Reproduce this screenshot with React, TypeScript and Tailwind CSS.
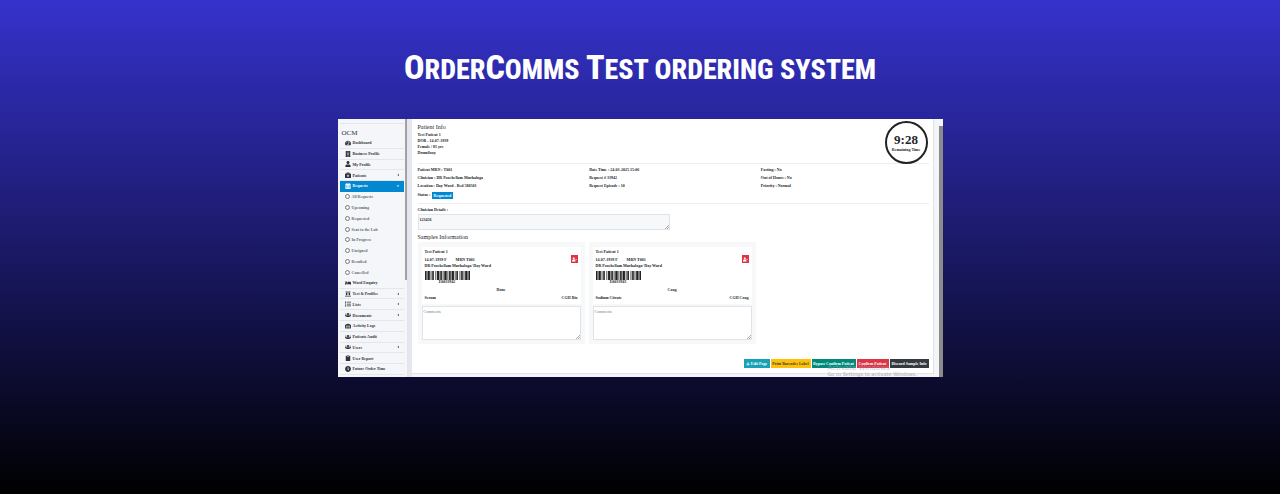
import type { ReactNode } from 'react'
import {
  FaAngleDown,
  FaBed,
  FaBriefcaseMedical,
  FaBuilding,
  FaCalendarAlt,
  FaCaretLeft,
  FaClipboard,
  FaClock,
  FaList,
  FaPlus,
  FaTachometerAlt,
  FaUser,
  FaUserMinus,
  FaUsers,
  FaVials,
  FaWarehouse,
} from 'react-icons/fa'

interface MenuItem {
  label: string
  icon: ReactNode
  expandable?: boolean
  children?: string[]
}

const MENU: MenuItem[] = [
  { label: 'Dashboard', icon: <FaTachometerAlt /> },
  { label: 'Business Profile', icon: <FaBuilding /> },
  { label: 'My Profile', icon: <FaUser /> },
  { label: 'Patients', icon: <FaBriefcaseMedical />, expandable: true },
  {
    label: 'Requests',
    icon: <FaCalendarAlt />,
    children: [
      'All Requests',
      'Upcoming',
      'Requested',
      'Sent to the Lab',
      'In Progress',
      'Unsigned',
      'Resulted',
      'Cancelled',
    ],
  },
  { label: 'Ward Enquiry', icon: <FaBed /> },
  { label: 'Test & Profiles', icon: <FaVials />, expandable: true },
  { label: 'Lists', icon: <FaList />, expandable: true },
  { label: 'Documents', icon: <FaUsers />, expandable: true },
  { label: 'Activity Logs', icon: <FaWarehouse /> },
  { label: 'Patients Audit', icon: <FaUsers /> },
  { label: 'Users', icon: <FaUsers />, expandable: true },
  { label: 'User Report', icon: <FaClipboard /> },
  { label: 'Future Order Time', icon: <FaClock /> },
]

const DETAILS = [
  ['Patient MRN : T001', 'Clinician : DR Poochellam Murhaloga', 'Location : Day Ward - Bed 580501'],
  ['Date Time : 24-03-2025 15:06', 'Request # 33942', 'Request Episode : 10'],
  ['Fasting : No', 'Out of Hours : No', 'Priority : Normal'],
]

const SAMPLES = [
  { id: 'E0033942', department: 'Done', tube: 'Serum', code: 'CGH Bio' },
  { id: 'E0033943', department: 'Coag', tube: 'Sodium Citrate', code: 'CGH Coag' },
]

const ACTIONS = [
  { label: 'Edit Page', icon: <FaPlus />, className: 'w-[26px] bg-[#17a2b8] text-white' },
  { label: 'Print Barcodes Label', className: 'w-10 bg-[#ffc107] text-[#343a40]' },
  { label: 'Bypass Confirm Patient', className: 'w-11 bg-[#00897b] text-white' },
  { label: 'Confirm Patient', className: 'w-8 bg-[#dc3545] text-white' },
  { label: 'Discard Sample Info', className: 'w-[39px] bg-[#343a40] text-white' },
]

// bar widths and gaps, alternating
const BARS = [2, 1, 3, 1, 1, 1, 2, 2, 1, 1, 3, 1, 2, 1, 1, 1, 3, 1, 1, 1, 2, 1, 3, 1, 1, 1, 2, 2, 1, 1, 2, 1, 1, 1, 3, 1, 2]

function Barcode() {
  const total = BARS.reduce((sum, width) => sum + width, 0)
  let x = 0
  return (
    <svg viewBox={`0 0 ${total} 10`} preserveAspectRatio="none" className="h-[9px] w-[45px]" aria-hidden="true">
      {BARS.map((width, i) => {
        const start = x
        x += width
        return i % 2 === 0 ? <rect key={i} x={start} width={width} height="10" fill="#222" /> : null
      })}
    </svg>
  )
}

function ResizeGrip() {
  return (
    <svg
      viewBox="0 0 4 4"
      className="pointer-events-none absolute right-px bottom-px size-1"
      fill="none"
      stroke="#777"
      strokeWidth="0.6"
      aria-hidden="true"
    >
      <path d="M0 4 4 0M2 4 4 2" />
    </svg>
  )
}

function MenuRow({ item }: { item: MenuItem }) {
  const active = Boolean(item.children)
  return (
    <>
      <a
        href="#"
        className={`flex flex-1 items-center gap-px border-b pr-1 pl-1 font-bold ${
          active ? 'border-[#0288d1] bg-[#0288d1] text-white' : 'border-[#e4e6eb] text-[#30343a]'
        }`}
      >
        <span className="flex w-2 justify-center text-[6px]">{item.icon}</span>
        <span className="flex-1">{item.label}</span>
        {item.expandable && <FaCaretLeft />}
        {active && <FaAngleDown />}
      </a>
      {item.children?.map((label) => (
        <a
          key={label}
          href="#"
          className="flex flex-1 items-center gap-[2px] border-b border-transparent pl-[5px] font-bold text-[#666b72]"
        >
          <span className="size-[5px] rounded-full border border-[#777c83]" />
          {label}
        </a>
      ))}
    </>
  )
}

function Sidebar() {
  return (
    <nav className="flex w-[70px] shrink-0 bg-[#f4f6f9]">
      <div className="flex flex-1 flex-col pt-1 pr-px pb-[2px] pl-[2px]">
        <div className="mb-px border-t border-[#e4e6eb] pt-[5px] pl-[2px] text-[7px] leading-[8px] text-[#30343a]">
          OCM
        </div>
        {MENU.map((item) => (
          <MenuRow key={item.label} item={item} />
        ))}
      </div>
      <div className="h-[161px] w-[2px] bg-[#a0a2a6]" />
      <div className="w-px bg-[#e4e5eb]" />
    </nav>
  )
}

function SampleCard({ sample }: { sample: (typeof SAMPLES)[number] }) {
  return (
    <section className="h-[102px] w-[167px] bg-[#f7f8fa] px-1 pt-[5px]">
      <div className="h-[57px] bg-white px-[3px] pt-[2px] font-bold">
        <div className="flex justify-between">
          <div className="leading-[6px]">
            <p className="mb-[2px]">Test Patient 1</p>
            <p className="flex gap-[9px]">
              <span>14-07-1939 F</span>
              <span>MRN T001</span>
            </p>
            <p>DR Poochellam Murhaloga/ Day Ward</p>
          </div>
          <button
            type="button"
            aria-label="Remove sample"
            className="mt-[6px] flex h-2 w-[7px] items-center justify-center bg-[#dc3545] text-[5px] text-white"
          >
            <FaUserMinus />
          </button>
        </div>
        <div className="mt-[2px] w-[45px] text-center leading-[4px]">
          <Barcode />
          {sample.id}
        </div>
        <p className="mt-[3px] text-center leading-[5px]">{sample.department}</p>
        <p className="mt-[3px] flex justify-between leading-[5px]">
          <span>{sample.tube}</span>
          <span>{sample.code}</span>
        </p>
      </div>
      <div className="relative mt-[2px]">
        <textarea
          aria-label={`Comments for ${sample.id}`}
          placeholder="Comments"
          className="block h-[34px] w-full resize-none border border-[#dfe4e8] bg-white px-px py-[2px] placeholder:text-[#777d84]"
        />
        <ResizeGrip />
      </div>
    </section>
  )
}

function RequestPage() {
  return (
    <main className="flex min-w-0 flex-1 flex-col border-r border-b border-[#e2e3e8] bg-white pr-1 pb-[5px] pl-[6px] text-[#212529]">
      <header className="flex h-[45px] justify-between border-b border-[#eeeeef] pt-[2px]">
        <div className="pt-[3px] leading-[6px] font-bold">
          <h2 className="mb-px text-[6px] leading-[7px] font-normal">Patient Info</h2>
          <p>Test Patient 1</p>
          <p>DOB - 14-07-1939</p>
          <p>Female / 85 yrs</p>
          <p>Dromiloxy</p>
        </div>
        <div className="mr-px flex size-[43px] flex-col items-center justify-center rounded-full border-2 border-[#222] font-bold">
          <span className="text-[13px] leading-[14px]">9:28</span>
          <span className="leading-[6px]">Remaining Time</span>
        </div>
      </header>

      <section className="h-10 border-b border-[#eeeeef] pt-[2px] font-bold">
        <div className="-mr-1 grid grid-cols-3 leading-[8px]">
          {DETAILS.map((column) => (
            <div key={column[0]}>
              {column.map((line) => (
                <p key={line}>{line}</p>
              ))}
            </div>
          ))}
        </div>
        <p className="mt-px flex items-center gap-px leading-[8px]">
          Status : <span className="bg-[#0288d1] px-[2px] leading-[7px] text-white">Requested</span>
        </p>
      </section>

      <label htmlFor="clinician-details" className="mt-[3px] leading-[5px] font-bold">
        Clinician Details :
      </label>
      <div className="relative mt-[2px] w-[49.5%]">
        <textarea
          id="clinician-details"
          defaultValue="123456"
          className="block h-4 w-full resize-none border border-[#dfe4e8] bg-[#f7f8fa] px-px py-[2px] font-bold"
        />
        <ResizeGrip />
      </div>
      <h2 className="mt-[3px] text-[6px] leading-[8px]">Samples Information</h2>
      <div className="mt-px flex gap-1">
        {SAMPLES.map((sample) => (
          <SampleCard key={sample.id} sample={sample} />
        ))}
      </div>
      <div className="mt-auto flex justify-end gap-px">
        {ACTIONS.map((action) => (
          <button
            key={action.label}
            type="button"
            className={`flex h-[9px] items-center justify-center gap-px font-bold whitespace-nowrap ${action.className}`}
          >
            {action.icon}
            {action.label}
          </button>
        ))}
      </div>
    </main>
  )
}

export default function App() {
  return (
    <div className="min-h-screen bg-linear-to-b/srgb from-[#3532cc] to-black px-4 pt-[43px]">
      <h1 className="text-center font-['Roboto_Condensed','Roboto',sans-serif] text-[28px] leading-[48px] font-extrabold text-white uppercase">
        <span className="text-[34px]">O</span>rder<span className="text-[34px]">C</span>omms{' '}
        <span className="text-[34px]">T</span>est ordering system
      </h1>
      <div className="relative mx-auto mt-[25px] flex min-h-[258px] max-w-[605px] bg-[#f4f5f9] font-['Liberation_Serif',serif] text-[4px] leading-[5px]">
        <Sidebar />
        <div className="flex min-w-0 flex-1 border-l-4 border-[#e6e7ee] pb-[3px]">
          <RequestPage />
        </div>
        <div className="ml-[5px] pt-[7px]">
          <div className="h-full w-1 bg-[#8b8b8b]" />
        </div>
        <div className="pointer-events-none absolute right-[25px] bottom-0 w-[90px] font-['DejaVu_Sans',sans-serif] text-[5px] leading-[5px] whitespace-nowrap text-[#a9a9ab]">
          <p className="text-[7px] leading-[7px] opacity-60">Activate Windows</p>
          <p>Go to Settings to activate Windows.</p>
        </div>
      </div>
    </div>
  )
}
